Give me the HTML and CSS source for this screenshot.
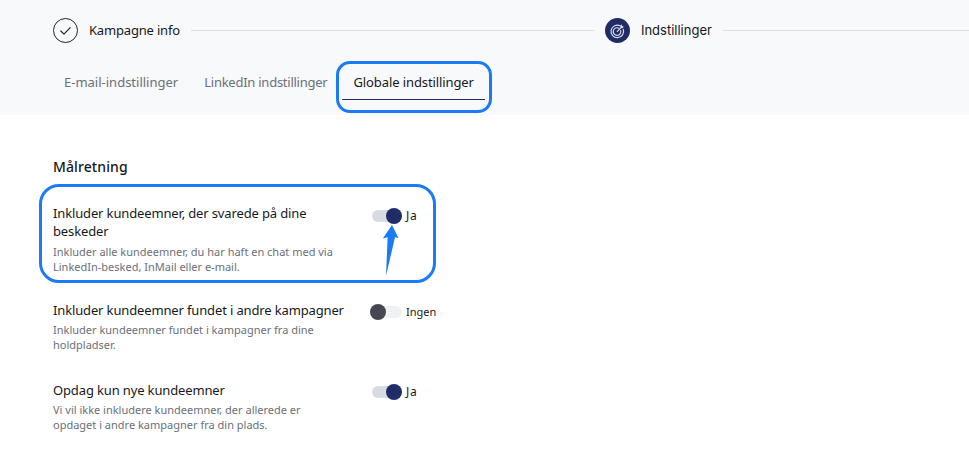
FILE: index.html
```html
<!DOCTYPE html>
<html lang="en">
<head>
    <meta charset="UTF-8">
    <meta name="viewport" content="width=device-width, initial-scale=1.0">
    <title>Globale indstillinger</title>
    <link rel="stylesheet" href="styles.css">
</head>
<body>
    <div class="top">
        <div class="steps">
            <div class="step-icon">
                <svg width="25" height="25" viewBox="0 0 25 25">
                    <circle cx="12.5" cy="12.5" r="12" fill="none" stroke="#24252b" stroke-width="1"/>
                    <path d="M7.8 13l3.2 3.2 6.2-6.6" fill="none" stroke="#24252b" stroke-width="1.2" stroke-linecap="round" stroke-linejoin="round"/>
                </svg>
            </div>
            <div class="step-name">Kampagne info</div>
            <div class="step-line step-line-first"></div>
            <div class="step-icon">
                <svg width="25" height="25" viewBox="0 0 25 25">
                    <circle cx="12.5" cy="12.500" r="12.5" fill="#1f2c66"/>
                    <path d="M15.2 7.800a6.300 6.300 0 1 0 3.100 3.600" fill="none" stroke="#d9dce8" stroke-width="1.200" stroke-linecap="round"/>
                    <path d="M14 10.300a3.800 3.800 0 1 0 1.700 2.200" fill="none" stroke="#d9dce8" stroke-width="1.200" stroke-linecap="round"/>
                    <path d="M12.300 13.300l4-4" fill="none" stroke="#d9dce8" stroke-width="1.200" stroke-linecap="round"/>
                    <path d="M16.400 6.300l.8 1.700 1.700.8-1.500 1.400-1.700-.3-.4-1.800z" fill="#d9dce8"/>
                </svg>
            </div>
            <div class="step-name step-name-inter">Indstillinger</div>
            <div class="step-line"></div>
        </div>
        <div class="tabs">
            <div class="tab tab-mail">E-mail-indstillinger</div>
            <div class="tab tab-linkedin">LinkedIn indstillinger</div>
            <div class="tab tab-active">Globale indstillinger</div>
        </div>
    </div>

    <div class="content">
        <h2 class="heading">Målretning</h2>

        <div class="row row-marked">
            <div class="row-text">
                <div class="row-title">Inkluder kundeemner, der svarede på dine beskeder</div>
                <div class="row-desc">Inkluder alle kundeemner, du har haft en chat med via LinkedIn-besked, InMail eller e-mail.</div>
            </div>
            <div class="switch">
                <div class="track on"><div class="knob"></div></div>
                <span class="switch-label">Ja</span>
            </div>
            <svg class="arrow" width="20" height="52" viewBox="0 0 20 52">
                <path d="M12 0L18.500 13 15 12.300 6 51 7.600 12.300 2.800 13.500z" fill="#1a7bf5"/>
            </svg>
        </div>

        <div class="row">
            <div class="row-text">
                <div class="row-title">Inkluder kundeemner fundet i andre kampagner</div>
                <div class="row-desc">Inkluder kundeemner fundet i kampagner fra dine holdpladser.</div>
            </div>
            <div class="switch">
                <div class="track"><div class="knob"></div></div>
                <span class="switch-label">Ingen</span>
            </div>
        </div>

        <div class="row">
            <div class="row-text">
                <div class="row-title">Opdag kun nye kundeemner</div>
                <div class="row-desc">Vi vil ikke inkludere kundeemner, der allerede er opdaget i andre kampagner fra din plads.</div>
            </div>
            <div class="switch">
                <div class="track on"><div class="knob"></div></div>
                <span class="switch-label">Ja</span>
            </div>
        </div>
    </div>
</body>
</html>
```

FILE: styles.css
```css
*, *::before, *::after {
    box-sizing: border-box;
}
body {
    margin: 0;
    background: #fff;
    color: #17181c;
    font-family: "Noto Sans", "Liberation Sans", sans-serif;
    overflow: hidden;
}

/* top area */
.top {
    height: 115px;
    background: #f8f9fb;
    padding: 18px 0 0 53px;
}
.steps {
    display: flex;
    align-items: center;
    height: 25px;
}
.step-icon {
    width: 25px;
    height: 25px;
    flex: none;
}
.step-name {
    margin: 0 11px;
    font-size: 13px;
    letter-spacing: -0.18px;
    line-height: 25px;
    white-space: nowrap;
}
.step-name-inter {
    font-family: Inter, sans-serif;
    letter-spacing: 0;
}
.step-line {
    flex: 1;
    height: 1px;
    background: #dcdee3;
}
.step-line-first {
    flex: none;
    width: 403px;
    margin-right: 11px;
}
.tabs {
    display: flex;
    margin-top: 19px;
}
.tab {
    position: relative;
    padding: 0 11px;
    margin-right: 4px;
    height: 38px;
    font-size: 13px;
    letter-spacing: -0.1px;
    line-height: 40px;
    color: #6c6f78;
    white-space: nowrap;
}
.tab-mail {
    letter-spacing: 0;
}
.tab-linkedin {
    letter-spacing: -0.25px;
}
.tab-active {
    color: #17181c;
    border-bottom: 1px solid #1f2c66;
}
.tab-active::after {
    content: "";
    position: absolute;
    left: -6px;
    right: -7px;
    top: -1px;
    bottom: -14px;
    border: 3px solid #1a7bf5;
    border-radius: 14px;
}

/* settings */
.content {
    padding: 43px 0 0 53px;
}
.heading {
    margin: 0 0 28px;
    font-size: 14px;
    font-weight: 500;
    letter-spacing: 0.1px;
    line-height: 18px;
}
.row {
    position: relative;
    display: flex;
    align-items: flex-start;
    margin-bottom: 27px;
}
.row + .row {
    margin-bottom: 29px;
}
.row-text {
    width: 295px;
}
.row-title {
    font-size: 13px;
    letter-spacing: -0.14px;
    line-height: 18px;
}
.row-desc {
    margin-top: 3px;
    max-width: 285px;
    font-size: 11px;
    line-height: 15px;
    color: #6b6f7a;
}
.row-marked .row-desc {
    margin-top: 4px;
}
.row-marked::before {
    content: "";
    position: absolute;
    left: -14px;
    top: -20px;
    width: 397px;
    height: 99px;
    border: 3px solid #1a7bf5;
    border-radius: 20px;
}
.switch {
    display: flex;
    align-items: center;
    margin: 3px 0 0 22px;
}
.row-marked .switch {
    margin-top: 4px;
}
.track {
    position: relative;
    width: 32px;
    height: 12px;
    border-radius: 6px;
    background: #f0f1f3;
}
.track.on {
    width: 30px;
    margin-left: 2px;
    background: #d8dbe4;
}
.knob {
    position: absolute;
    left: 0;
    top: -2px;
    width: 16px;
    height: 16px;
    border-radius: 50%;
    background: #45464f;
}
.track.on .knob {
    left: 14px;
    background: #1f2c66;
}
.switch-label {
    margin-left: 4px;
    font-size: 11px;
    line-height: 16px;
}
.track.on + .switch-label {
    font-size: 12px;
    letter-spacing: 0.6px;
}
.arrow {
    position: absolute;
    left: 327px;
    top: 21px;
}
```
